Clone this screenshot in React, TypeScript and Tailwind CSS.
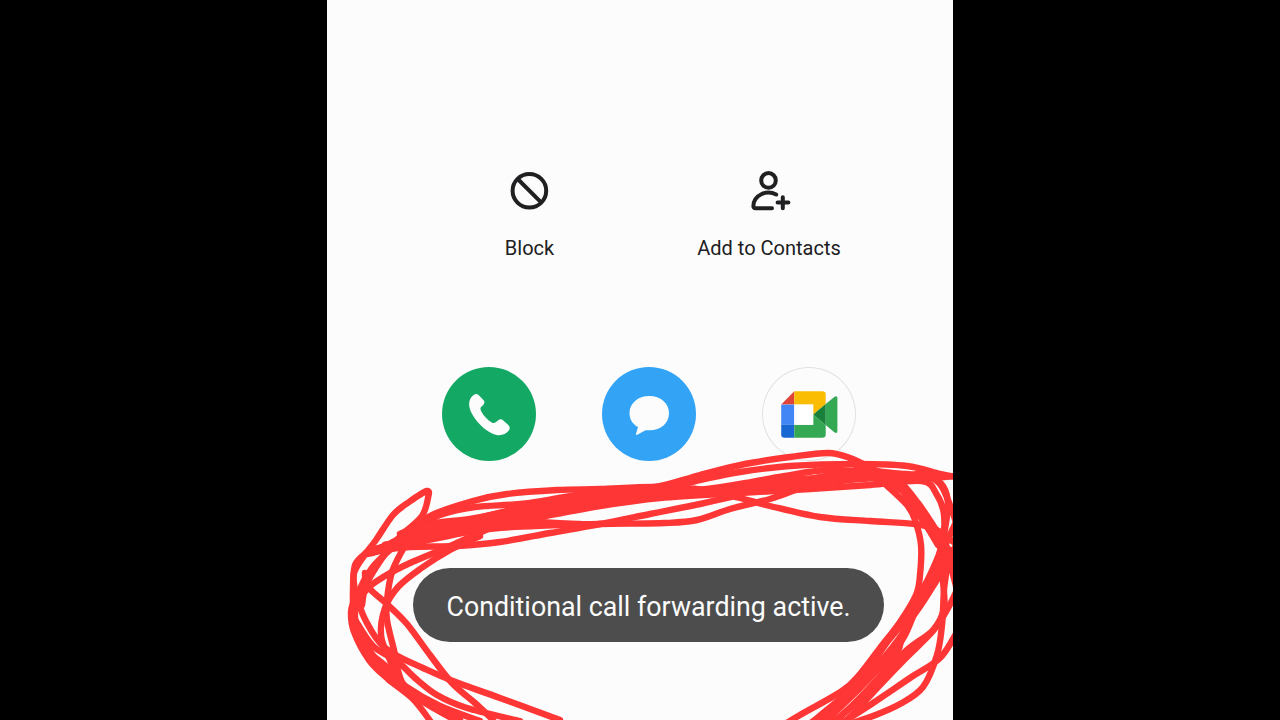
type Point = [number, number]

// ─────────────────────────────────────────────
// MARKER STROKES
// Each stroke is a list of points, joined by a smooth curve
// ─────────────────────────────────────────────

const STROKES: Point[][] = [
  // Loop on the left
  [[366, 553], [376, 540], [393, 515], [409, 502], [427, 491], [428, 498], [422, 516], [404, 533], [388, 550], [367, 583], [362, 605]],
  // Upper arc
  [[366, 553], [395, 541], [430, 516], [473, 501], [507, 494], [557, 490], [600, 489], [655, 487], [705, 490], [740, 498], [770, 506], [820, 517], [870, 521], [915, 524], [937, 530], [957, 545]],
  [[400, 534], [440, 515], [475, 507], [530, 503], [600, 491], [655, 487], [700, 475], [745, 464], [790, 457], [828, 453], [850, 458], [873, 469], [892, 479], [913, 503], [937, 540], [957, 575]],
  [[400, 538], [450, 525], [520, 508], [580, 496], [655, 490], [700, 480], [740, 472], [790, 466], [857, 464], [907, 466], [940, 474], [957, 477]],
  [[375, 549], [430, 533], [500, 514], [560, 505], [620, 496], [690, 491], [740, 484], [785, 476], [830, 470], [890, 474], [920, 478], [957, 476]],
  [[385, 548], [430, 533], [480, 518], [530, 515], [580, 508], [640, 497], [700, 493], [740, 491], [800, 481], [860, 471], [892, 480], [909, 500], [925, 524], [942, 552], [925, 590], [905, 630], [875, 668], [847, 695], [817, 722]],
  [[390, 545], [450, 535], [530, 519], [600, 506], [660, 498], [740, 493], [810, 489], [870, 485], [922, 481], [937, 495], [944, 515], [942, 545], [930, 575], [908, 618]],
  [[390, 545], [450, 529], [500, 515], [560, 508], [620, 501], [680, 495], [780, 481], [860, 477], [885, 483], [907, 494], [920, 515], [938, 545]],
  [[700, 494], [750, 490], [800, 485], [860, 479], [900, 477], [922, 474], [939, 483], [948, 500], [957, 525]],
  [[850, 463], [875, 471], [905, 474], [930, 477], [943, 486], [948, 505], [944, 535]],
  // Lower arc
  [[368, 554], [410, 544], [480, 530], [535, 526], [600, 524], [665, 523], [697, 520], [730, 509], [770, 499], [805, 487], [850, 475]],
  [[375, 551], [410, 547], [457, 546], [500, 542], [550, 533], [600, 524], [650, 514], [700, 504], [740, 495]],
  [[385, 545], [430, 538], [480, 527], [530, 521], [550, 524], [600, 524]],
  [[385, 545], [440, 533], [500, 520], [530, 518], [540, 522], [580, 524]],
  [[393, 542], [415, 535], [440, 528], [420, 538], [460, 531]],
  [[404, 535], [430, 524], [470, 519], [510, 511]],
  // Left side
  [[366, 553], [354, 573], [355, 595], [351, 612], [354, 632], [369, 660], [388, 679], [413, 699], [431, 722]],
  [[366, 553], [355, 565], [353, 590], [354, 615], [362, 637], [380, 665], [405, 686], [440, 706], [480, 721]],
  [[392, 548], [372, 568], [358, 595], [356, 625], [372, 655], [394, 680], [425, 701], [460, 720]],
  [[403, 549], [392, 572], [387, 600], [387, 620], [394, 650], [402, 682], [422, 700]],
  [[480, 536], [450, 550], [420, 569], [398, 587], [385, 608], [381, 635], [389, 658], [402, 684], [420, 700]],
  [[490, 528], [448, 547], [410, 563], [385, 576], [367, 589], [360, 606], [376, 638], [394, 654], [423, 668], [453, 681], [500, 698], [560, 720]],
  [[365, 573], [366, 584], [373, 592], [388, 605], [407, 624], [430, 655], [452, 683], [475, 703], [493, 720]],
  [[354, 618], [373, 646], [397, 661], [415, 678], [437, 695], [467, 708], [520, 721]],
  [[372, 655], [388, 668], [400, 683], [408, 692], [430, 706], [455, 720]],
  // Right side
  [[885, 484], [907, 505], [915, 520], [921, 545], [920, 575], [916, 595], [900, 622], [880, 648], [860, 674], [842, 691], [800, 715], [785, 724]],
  [[941, 535], [938, 560], [918, 598], [905, 620], [885, 645], [865, 675], [845, 695], [812, 722]],
  [[957, 545], [938, 570], [920, 600], [904, 637], [885, 662], [855, 693], [825, 722]],
  [[957, 550], [937, 580], [921, 605], [904, 630], [897, 653], [870, 688], [835, 722]],
  [[957, 520], [944, 550], [943, 578], [944, 608], [933, 630], [907, 650], [877, 680], [852, 706], [833, 722]],
  [[940, 540], [947, 560], [944, 590], [942, 625], [937, 655], [923, 687], [900, 704], [873, 716], [855, 722]],
  [[957, 590], [947, 610], [933, 631], [905, 659], [880, 685], [855, 712], [845, 722]],
  [[957, 632], [940, 658], [910, 678], [873, 703], [845, 721]],
  [[938, 540], [950, 565], [957, 590]],
  [[957, 560], [944, 543], [933, 525], [918, 503], [900, 482], [880, 474]],
]

const toPath = (pts: Point[]) => {
  let d = `M${pts[0][0]} ${pts[0][1]}`
  for (let i = 0; i < pts.length - 1; i++) {
    const p0 = pts[Math.max(i - 1, 0)]
    const p1 = pts[i]
    const p2 = pts[i + 1]
    const p3 = pts[Math.min(i + 2, pts.length - 1)]
    d += `C${p1[0] + (p2[0] - p0[0]) / 6} ${p1[1] + (p2[1] - p0[1]) / 6} ${p2[0] - (p3[0] - p1[0]) / 6} ${p2[1] - (p3[1] - p1[1]) / 6} ${p2[0]} ${p2[1]}`
  }
  return d
}

// ─────────────────────────────────────────────
// ICONS
// ─────────────────────────────────────────────

function BlockIcon() {
  return (
    <svg className="h-10 w-10" viewBox="0 0 40 40" fill="none" stroke="#202022" strokeWidth="4">
      <circle cx="20.4" cy="19.7" r="16.8" />
      <path d="M8.7 8 32.1 31.4" />
    </svg>
  )
}

function AddContactIcon() {
  return (
    <svg className="h-10 w-10 overflow-visible" viewBox="0 0 40 40" fill="none" stroke="#202022" strokeWidth="4" strokeLinecap="round" strokeLinejoin="round">
      <circle cx="19.5" cy="9.4" r="7.3" />
      <path d="M27.2 23.5C17.7 18.6 4.7 23.8 4.4 35Q4.3 37.2 6.5 37.2H23" />
      <path d="M28.6 31.6H39.4M33.8 26.2V37.2" />
    </svg>
  )
}

function PhoneIcon() {
  return (
    <svg className="h-[94px] w-[94px]" viewBox="0 0 94 94" fill="#fcfcfc">
      <path d="M31.6 28C33.2 26.7 35.2 26.6 36.6 28L41.4 32.9C42.9 34.5 42.8 36.3 41.2 37.9L39.3 39.8C38.1 41.1 38.2 42.2 39.2 44.2C41.4 48.6 45.4 53 49.7 55.5C51.4 56.4 52.7 56.2 54 55L56 53.4C57.7 51.9 59.8 52 61.3 53.4L66.3 58.1C68.1 59.9 68.2 61.8 66.8 63.5C62.9 68.4 56.7 69.5 50.1 66.4C41.7 62.4 33.8 54.2 29.3 45.4C25.7 38.2 26.6 31.7 31.6 28Z" />
    </svg>
  )
}

function MessageIcon() {
  return (
    <svg className="h-[94px] w-[94px]" viewBox="0 0 94 94" fill="#fcfcfc">
      <path d="M47.3 29C58.8 29 67 36.3 67 46.2C67 56.1 59 63.3 47.5 63.3C46 63.3 44.5 63.2 43.1 63.5L35.3 67.7C34.3 68.2 33.7 67.6 34.1 66.5L36 60C30.7 57.2 27.5 52.4 27.5 46.2C27.5 36.3 35.8 29 47.3 29Z" />
    </svg>
  )
}

function MeetIcon() {
  return (
    <svg className="h-[94px] w-[94px]" viewBox="0 0 94 94">
      <path fill="#e04338" d="M19.2 37.6 32.3 24.3V37.6Z" />
      <path fill="#4285f4" d="M19.2 37.6H32.3V57.8H19.2Z" />
      <path fill="#1967d2" d="M19.2 57.8H32.3V70.7H22.4Q19.2 70.7 19.2 67.5Z" />
      <path fill="#fbbc04" d="M32.3 24.3H60.4Q63.7 24.3 63.7 27.6V37L51.2 47.6V37.6H32.3Z" />
      <path fill="#34a853" d="M32.3 57.8H51.2V47.6L63.7 58V67.4Q63.7 70.7 60.4 70.7H32.3Z" />
      <path fill="#34a853" d="M63.7 37 72.3 29.9Q75.4 28 75.4 31.4V64Q75.4 67.3 72.3 65.2L63.7 58Z" />
      <path fill="#188038" d="M51.2 47.6 63.7 37V58Z" />
      <path fill="#fff" d="M32.3 37.6H51.2V57.8H32.3Z" />
    </svg>
  )
}

// ─────────────────────────────────────────────
// COMPONENT
// ─────────────────────────────────────────────

export default function App() {
  return (
    <div className="flex h-screen w-full justify-center overflow-hidden bg-black font-[Roboto,sans-serif]">
      <main className="relative flex h-[720px] w-[626px] flex-col items-center overflow-hidden bg-[#fcfcfc]">
        {/* Contact options */}
        <div className="ml-[18px] mt-[171px] flex">
          <button className="flex w-60 flex-col items-center">
            <BlockIcon />
            <span className="ml-px mt-[23.4px] text-[20px] leading-7 text-[#202022]">Block</span>
          </button>
          <button className="flex w-60 flex-col items-center">
            <AddContactIcon />
            <span className="mt-[23.4px] whitespace-nowrap text-[20px] leading-7 text-[#202022]">Add to Contacts</span>
          </button>
        </div>

        {/* Call actions */}
        <div className="ml-[18px] mt-[104.8px] flex gap-[66px]">
          <button className="rounded-full bg-[#14a865]"><PhoneIcon /></button>
          <button className="rounded-full bg-[#32a3f5]"><MessageIcon /></button>
          <button className="rounded-full shadow-[inset_0_0_0_1px_#e2e2e2]"><MeetIcon /></button>
        </div>

        {/* Toast */}
        <div className="ml-[17px] mt-[107px] flex h-[74px] w-[471px] items-center justify-center rounded-full bg-[#4d4d4d] pt-[3px]">
          <span className="whitespace-nowrap text-[26.8px] text-[#fcfcfc]">Conditional call forwarding active.</span>
        </div>

        {/* Marker drawing over the screen */}
        <svg
          className="pointer-events-none absolute inset-0 h-[720px] w-[626px]"
          viewBox="327 0 626 720"
          fill="none"
          stroke="#ff3636"
          strokeWidth="6.4"
          strokeLinecap="round"
          strokeLinejoin="round"
        >
          {STROKES.map((pts, i) => (
            <path key={i} d={toPath(pts)} />
          ))}
        </svg>
      </main>
    </div>
  )
}
